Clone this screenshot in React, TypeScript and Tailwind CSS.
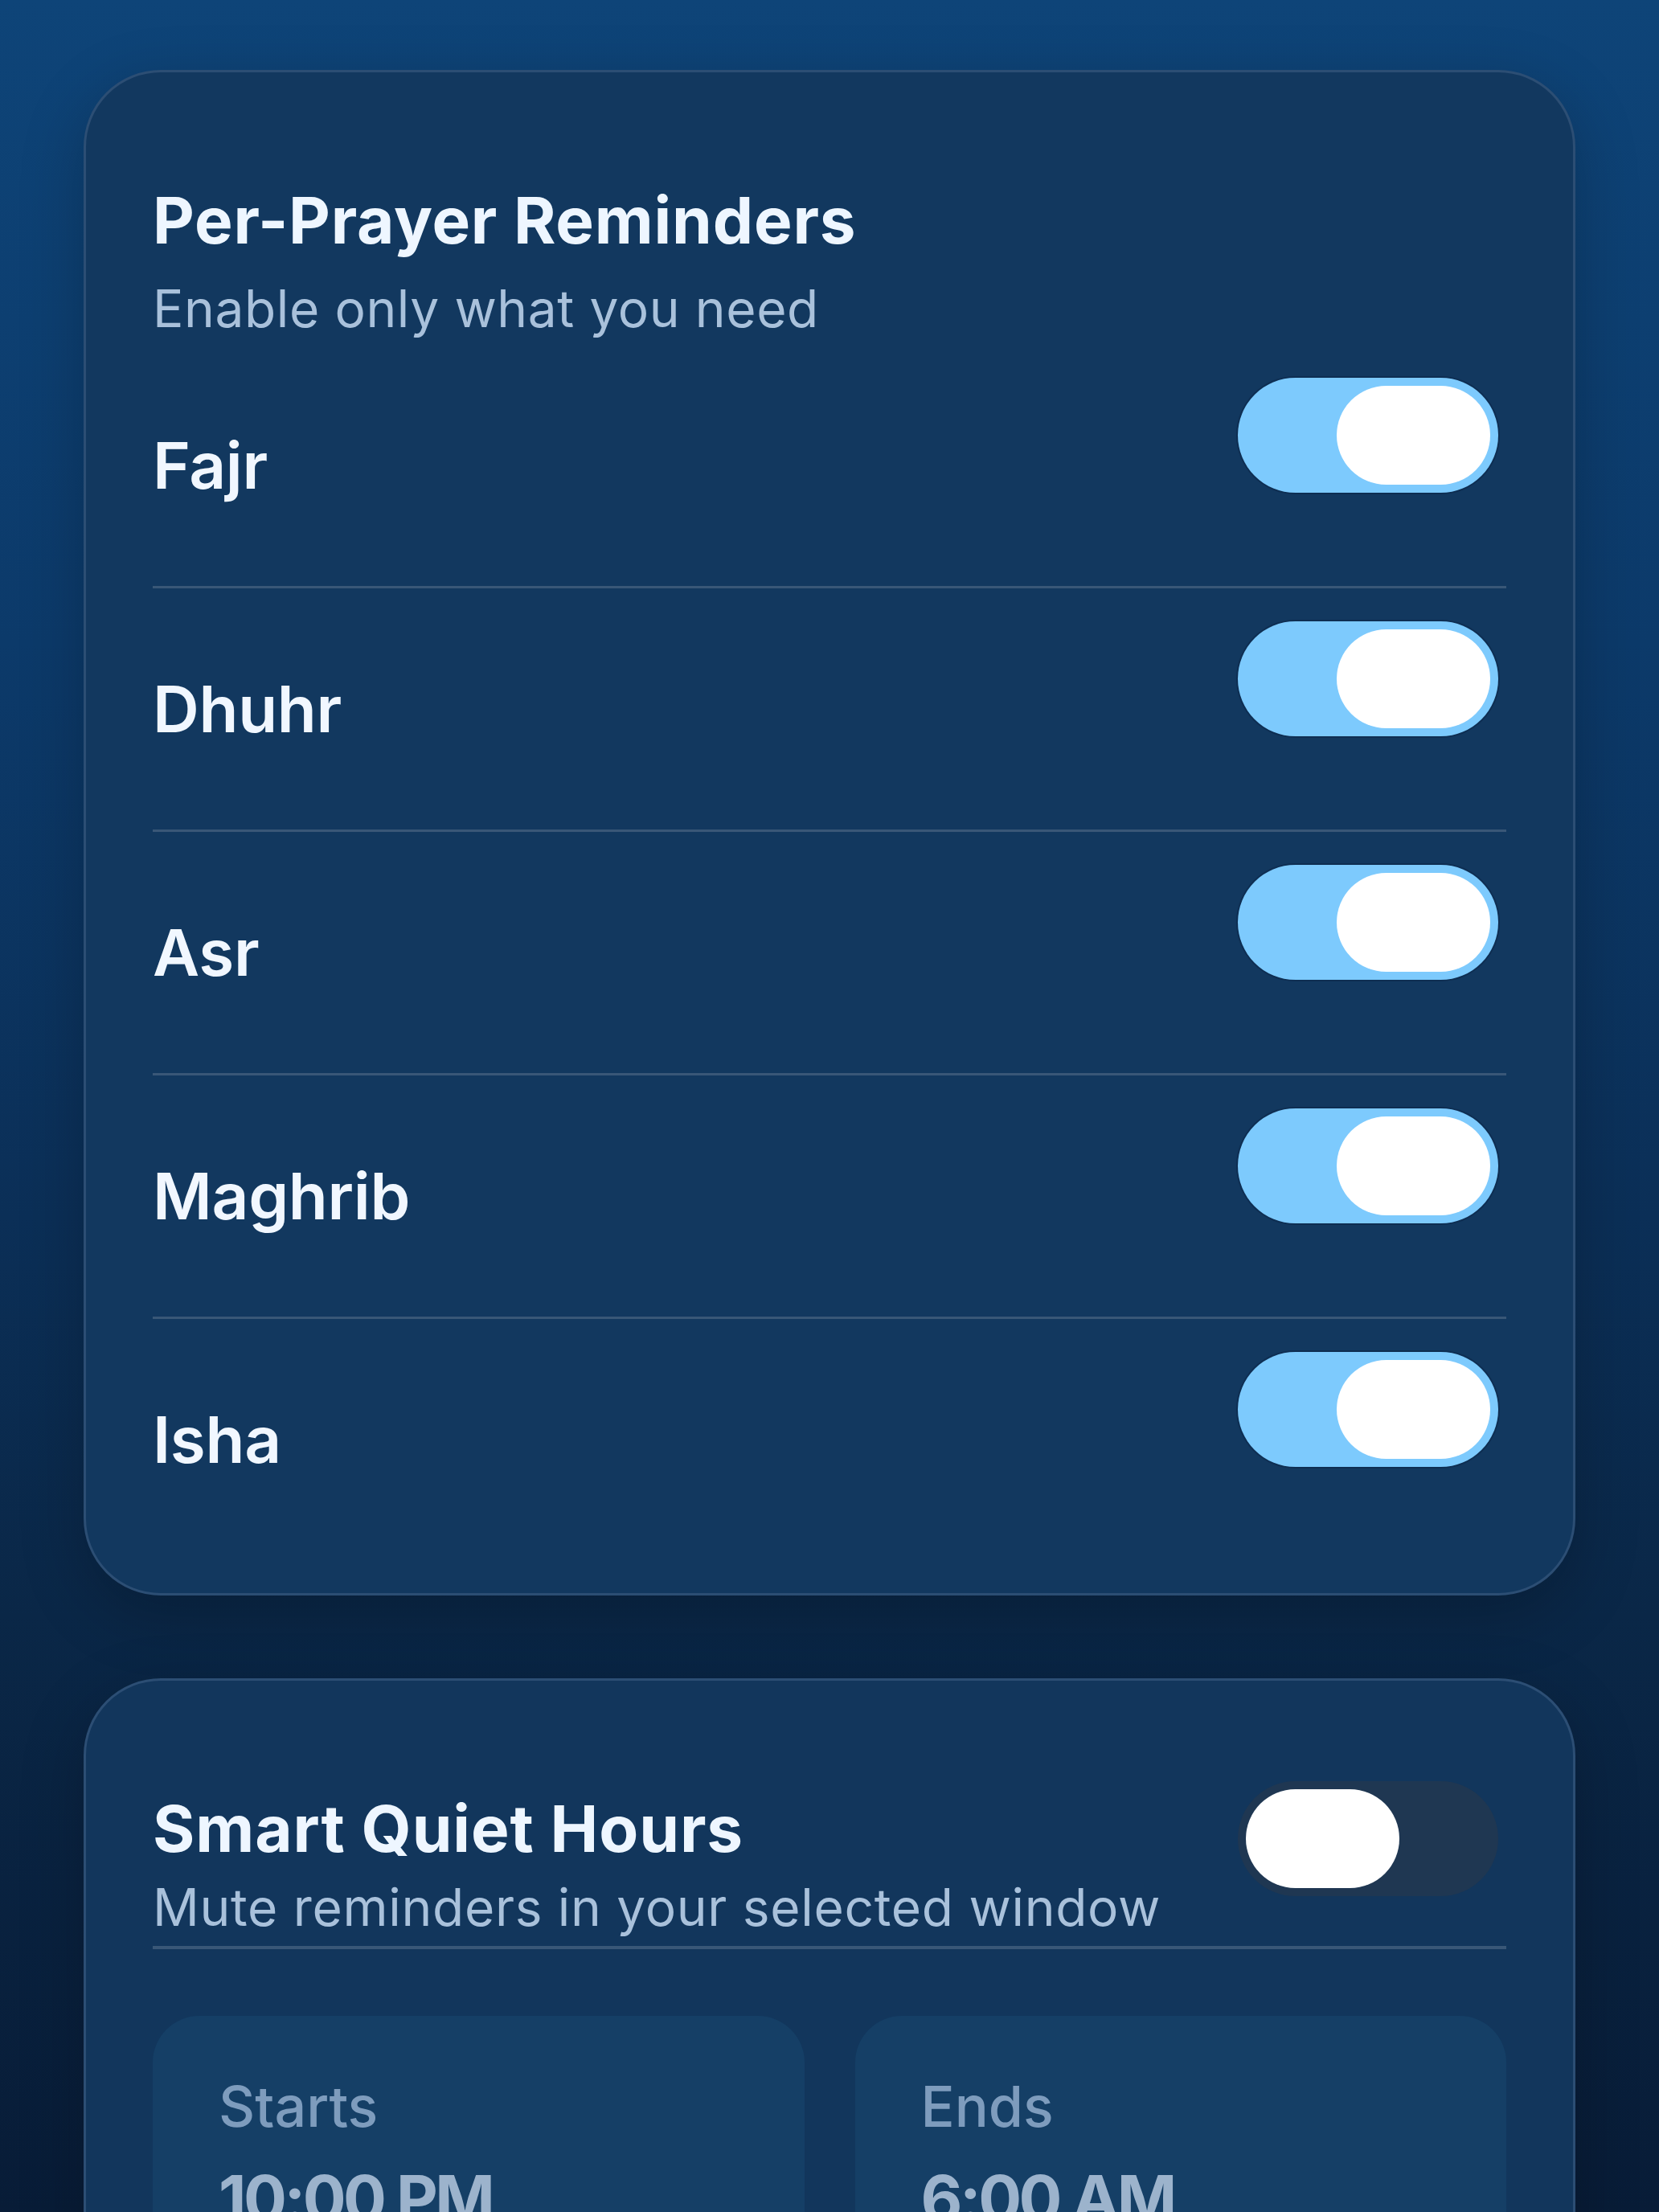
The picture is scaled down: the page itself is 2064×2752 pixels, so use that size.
import { useState } from "react"

const prayers = ["Fajr", "Dhuhr", "Asr", "Maghrib", "Isha"]

function Toggle({ on, onChange, className = "" }: { on: boolean; onChange: () => void; className?: string }) {
  return (
    <button
      onClick={onChange}
      className={`flex h-[143px] w-[324px] shrink-0 rounded-full p-[10px] ${
        on ? "justify-end bg-[#7dcafd] shadow-[0_0_0_2px_rgba(8,30,60,0.35)]" : "justify-start bg-[#1f3752]"
      } ${className}`}
    >
      <span className="h-[123px] w-[191px] rounded-full bg-white" />
    </button>
  )
}

export default function App() {
  const [enabled, setEnabled] = useState<Record<string, boolean>>({
    Fajr: true,
    Dhuhr: true,
    Asr: true,
    Maghrib: true,
    Isha: true,
  })
  const [quiet, setQuiet] = useState(false)

  return (
    <div className="h-[2752px] w-full overflow-hidden bg-[linear-gradient(180deg,#0e4478_0%,#0c3a6a_29%,#0b2f57_55%,#0a2747_73%,#081c37_100%)] px-[104px] pt-[87px] font-[Inter,'Noto_Sans',sans-serif]">
      <div className="flex flex-col gap-[103px]">
        {/* Per-prayer card */}
        <section className="rounded-[96px] border-[3px] border-[#2c4e74] bg-[#12385f] px-[83px] pb-[41px] pt-[136px] shadow-[0_24px_80px_rgba(0,0,0,0.22)]">
          <h2 className="text-[80px] font-bold leading-[96px] tracking-[0.8px] text-[#eef6ff]">Per-Prayer Reminders</h2>
          <p className="mt-[17px] text-[64px] leading-[90px] tracking-[0.6px] text-[#a9c1db]">Enable only what you need</p>

          {prayers.map((p, i) => (
            <div key={p}>
              {i > 0 && <div className="h-[3px] bg-[#395777]" />}
              <div className="flex h-[300px] items-center justify-between">
                <span className="text-[80px] font-semibold leading-[96px] tracking-[-0.3px] text-[#f1f7ff]">{p}</span>
                <Toggle
                  on={enabled[p]}
                  onChange={() => setEnabled({ ...enabled, [p]: !enabled[p] })}
                  className="mr-[10px] mt-[41px] self-start"
                />
              </div>
            </div>
          ))}
        </section>

        {/* Quiet hours card */}
        <section className="rounded-[96px] border-[3px] border-[#2c4e74] bg-[#12365c] px-[83px] pb-[120px] pt-[136px] shadow-[0_24px_80px_rgba(0,0,0,0.22)]">
          <div className="flex items-start justify-between">
            <div>
              <h2 className="text-[80px] font-bold leading-[96px] tracking-[0.9px] text-[#eef6ff]">Smart Quiet Hours</h2>
              <p className="mt-[5px] text-[64px] leading-[90px] tracking-[0.7px] text-[#a9c1db]">Mute reminders in your selected window</p>
            </div>
            <Toggle on={quiet} onChange={() => setQuiet(!quiet)} className="-mt-[11px] mr-[10px]" />
          </div>
          <div className="mt-[3px] h-[4px] bg-[#395777]" />

          <div className="mt-[83px] grid grid-cols-2 gap-[63px]">
            {[
              { label: "Starts", time: "10:00 PM" },
              { label: "Ends", time: "6:00 AM" },
            ].map((t) => (
              <div key={t.label} className="h-[400px] rounded-[58px] bg-[#153f66] px-[82px] pt-[64px]">
                <div className="text-[70px] font-medium leading-[98px] text-[#7e9cbd]">{t.label}</div>
                <div className="mt-[17px] text-[80px] font-bold leading-[96px] tracking-[-3.5px] text-[#9cb3cc]">{t.time}</div>
              </div>
            ))}
          </div>
        </section>
      </div>
    </div>
  )
}
